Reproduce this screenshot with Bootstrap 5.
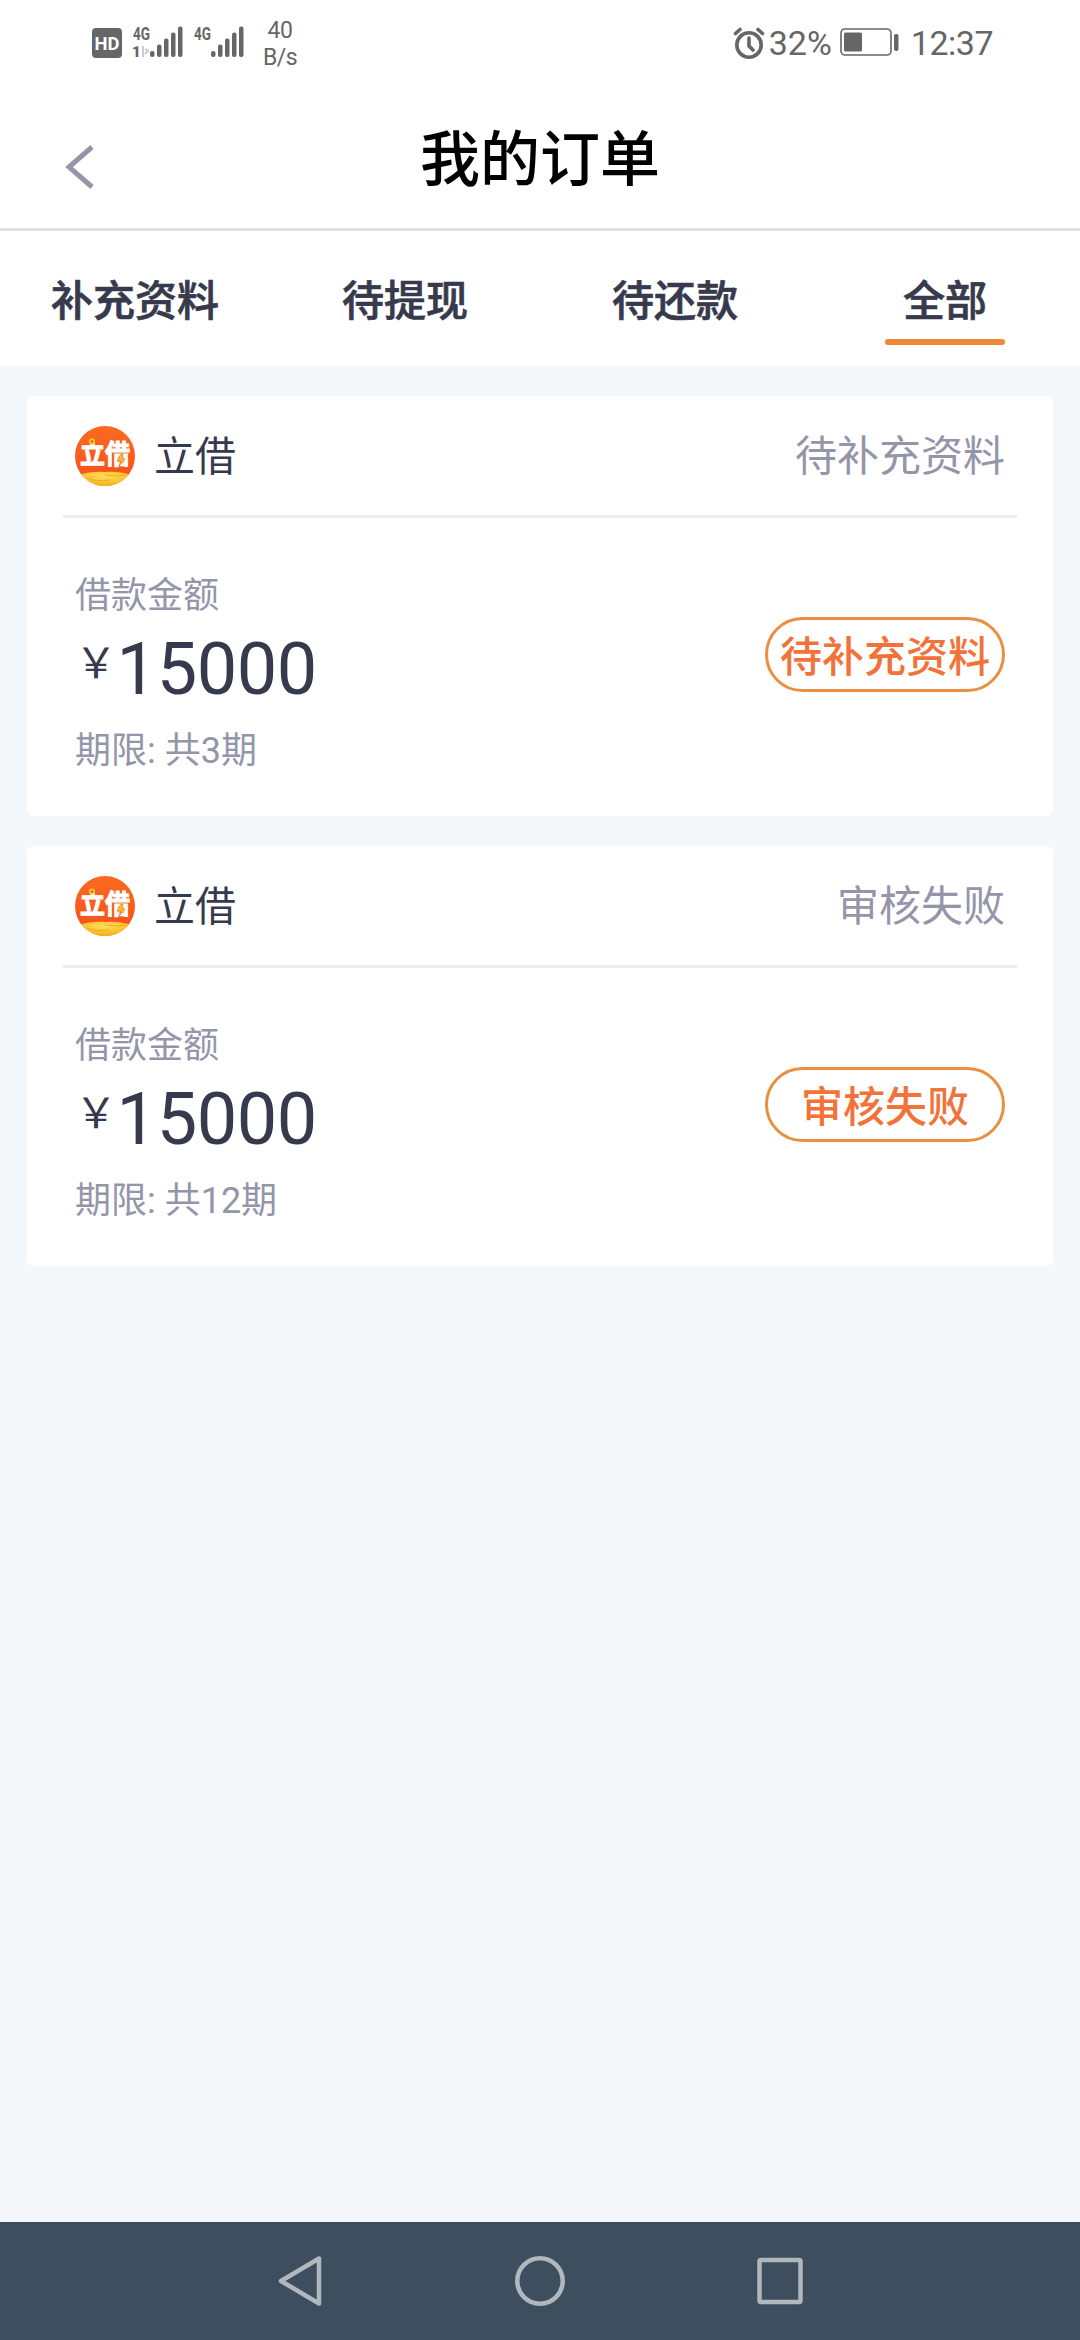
<!DOCTYPE html>
<html lang="zh-CN">
<head>
<meta charset="utf-8">
<meta name="viewport" content="width=device-width, initial-scale=1">
<title>我的订单</title>
<link rel="stylesheet" href="https://cdn.jsdelivr.net/npm/bootstrap@5.3.0/dist/css/bootstrap.min.css">
<style>
  body { font-family: Roboto, "Noto Sans CJK SC", sans-serif; background: #f4f8fb; color: #373a4d; min-height: 2340px; }
  svg { display: block; flex: none; }
  .status-bar { height: 84px; padding: 0 87px 0 92px; color: #666; }
  .net-speed { font-size: 23px; line-height: 27px; letter-spacing: -.5px; margin-left: 73px; padding-top: 17px; width: 40px; }
  .status-right { font-size: 34px; line-height: 40px; padding-top: 2px; }
  .status-right .clock { letter-spacing: -.5px; margin-left: 11px; }
  .title-bar { height: 147px; border-bottom: 3px solid #e0e0e0; padding: 0 62px; }
  .title-bar .side { width: 35px; padding-top: 22px; }
  .title-bar h1 { font-size: 60px; line-height: 84px; font-weight: 500; color: #000; padding-top: 9px; }
  .order-tabs { height: 135px; }
  .order-tabs .nav-link { padding: 41px 0 0; font-size: 42px; line-height: 60px; font-weight: 500; -webkit-text-stroke: .7px; color: #373a4d; }
  .order-tabs .nav-link.active::after { content: ""; display: block; width: 120px; height: 6px; border-radius: 3px; background: #ee8736; margin: 7px auto 0; }
  .order-list { padding: 30px 27px; gap: 30px; }
  .order-card { height: 420px; border: 0; border-radius: 6px; color: #373a4d; }
  .order-head { margin: 0 36px; padding: 0 12px; height: 122px; border-bottom: 3px solid #ededed; font-size: 42px; line-height: 60px; }
  .order-head span { padding-top: 3px; }
  .order-head .app-name { margin-left: 19px; font-size: 41px; }
  .dim { color: #9495a9; }
  .order-body { padding: 52px 48px 0; }
  .field { font-size: 36px; line-height: 52px; }
  .amount { font-size: 72px; line-height: 84px; letter-spacing: -.4px; margin: 6px 0 13px; }
  .amount .yen { font-family: "Noto Sans CJK SC", sans-serif; font-size: 42px; line-height: 60px; margin-top: 2px; }
  .btn-state { width: 240px; height: 75px; border: 3px solid #e99040; color: #f2733a; font-size: 42px; line-height: 60px; font-weight: 500; padding: 7px 0 0; margin-top: 47px; white-space: nowrap; }
  .sys-nav { height: 118px; background: #3d4e5e; }
</style>
</head>
<body class="d-flex flex-column">
<svg width="0" height="0" class="position-absolute" aria-hidden="true">
  <defs>
    <linearGradient id="sky" x1="0" y1="0" x2="0" y2="1"><stop offset="0" stop-color="#fb6a20"/><stop offset="1" stop-color="#f4501b"/></linearGradient>
    <radialGradient id="gold" cx=".5" cy=".3" r=".6"><stop offset="0" stop-color="#ffe05c"/><stop offset="1" stop-color="#fbb419"/></radialGradient>
    <clipPath id="disc"><circle cx="30" cy="30" r="30"/></clipPath>
    <symbol id="logo" viewBox="0 0 60 60">
      <g clip-path="url(#disc)">
        <rect width="60" height="60" fill="url(#sky)"/>
        <path d="M4 49Q16 45 30 46Q44 45 56 49L60 60H0Z" fill="url(#gold)"/>
        <path d="M12 52Q20 56 34 54M30 49Q42 51 51 49" stroke="#f8a818" stroke-width="1" fill="none"/>
      </g>
      <text transform="translate(5 37.500) scale(1 1.080)" font-size="25" font-weight="700" font-family="Noto Sans CJK SC, sans-serif" fill="#fff" stroke="#fff" stroke-width=".9">立借</text>
      <circle cx="17" cy="15.500" r="2.200" fill="#f4501b" stroke="#ffd02b" stroke-width="1.800"/>
      <path d="M46 28L42 35H46L44 40L50 33H46.500L48 28Z" fill="#ffc928" stroke="#e97812" stroke-width=".8"/>
    </symbol>
  </defs>
</svg>

<header class="bg-white">
  <div class="status-bar d-flex justify-content-between">
    <div class="d-flex">
      <svg width="95" height="84" viewBox="92 0 95 84" overflow="visible" fill="currentColor">
        <rect x="92" y="28" width="30" height="30" rx="4"/>
        <text x="94.500" y="50" font-size="19" font-weight="700" fill="#fff" textLength="25" lengthAdjust="spacingAndGlyphs">HD</text>
        <text x="133" y="40" font-size="17.500" font-weight="700" textLength="17" lengthAdjust="spacingAndGlyphs">4G</text>
        <text x="132" y="57" font-size="15" font-weight="900">1</text>
        <path d="M143 46v11M145 49l3 2-3 3" stroke="#ccc" stroke-width="2" fill="none"/>
        <g id="bars"><rect x="150" y="51" width="4.500" height="6" rx="2"/><rect x="157" y="44.500" width="4.500" height="12.500" rx="2"/><rect x="164" y="38.500" width="4.500" height="18.500" rx="2"/><rect x="171" y="32.500" width="4.500" height="24.500" rx="2"/><rect x="178" y="26.500" width="4.500" height="30.500" rx="2"/></g>
        <text x="194" y="40" font-size="17.500" font-weight="700" textLength="17" lengthAdjust="spacingAndGlyphs">4G</text>
        <use href="#bars" x="61"/>
      </svg>
      <div class="net-speed text-center">40<br>B/s</div>
    </div>
    <div class="status-right d-flex align-items-center">
      <svg width="32" height="34" viewBox="0 0 32 34" fill="none" stroke="currentColor" stroke-width="3.600" stroke-linecap="round"><circle cx="16" cy="19" r="12.200"/><path d="M16 12v8l4 4M2.500 7.500L7 3.500M25 3.500L29.500 7.500"/></svg>
      <span class="ms-1">32%</span>
      <svg class="ms-2" width="60" height="30" viewBox="0 0 60 30"><rect x="1" y="1" width="50" height="26" rx="4" fill="none" stroke="currentColor" stroke-width="1.600"/><rect x="4" y="4.500" width="18" height="19" rx="1.500" fill="currentColor"/><rect x="54" y="6" width="4.500" height="17" rx="2" fill="currentColor"/></svg>
      <span class="clock">12:37</span>
    </div>
  </div>
  <div class="title-bar d-flex justify-content-between align-items-center">
    <div class="side"><svg width="35" height="48" viewBox="0 0 35 48" fill="none" stroke="#9495a9" stroke-width="5"><path d="M30 4L7 24L30 44"/></svg></div>
    <h1 class="mb-0">我的订单</h1>
    <div class="side"></div>
  </div>
  <ul class="nav nav-fill order-tabs row g-0">
    <li class="nav-item col-3"><a class="nav-link">补充资料</a></li>
    <li class="nav-item col-3"><a class="nav-link">待提现</a></li>
    <li class="nav-item col-3"><a class="nav-link">待还款</a></li>
    <li class="nav-item col-3"><a class="nav-link active">全部</a></li>
  </ul>
</header>

<main class="order-list d-flex flex-column flex-grow-1">
  <section class="card order-card">
    <div class="order-head d-flex align-items-center">
      <svg width="60" height="60"><use href="#logo"/></svg>
      <span class="app-name">立借</span>
      <span class="dim ms-auto">待补充资料</span>
    </div>
    <div class="order-body d-flex justify-content-between align-items-start">
      <div>
        <div class="field dim">借款金额</div>
        <div class="amount d-flex align-items-start"><span class="yen">￥</span><span>15000</span></div>
        <div class="field dim">期限: 共3期</div>
      </div>
      <button class="btn btn-state rounded-pill">待补充资料</button>
    </div>
  </section>
  <section class="card order-card">
    <div class="order-head d-flex align-items-center">
      <svg width="60" height="60"><use href="#logo"/></svg>
      <span class="app-name">立借</span>
      <span class="dim ms-auto">审核失败</span>
    </div>
    <div class="order-body d-flex justify-content-between align-items-start">
      <div>
        <div class="field dim">借款金额</div>
        <div class="amount d-flex align-items-start"><span class="yen">￥</span><span>15000</span></div>
        <div class="field dim">期限: 共12期</div>
      </div>
      <button class="btn btn-state rounded-pill">审核失败</button>
    </div>
  </section>
</main>

<footer class="sys-nav">
  <svg width="1080" height="118" viewBox="0 0 1080 118" fill="none" stroke="#b0b7bd" stroke-width="4.500" stroke-linejoin="round">
    <path d="M281 59L319 36.500V81.500Z"/>
    <circle cx="540" cy="59" r="22.700"/>
    <rect x="759.500" y="38" width="41" height="42" rx="1.500"/>
  </svg>
</footer>
<script src="https://cdn.jsdelivr.net/npm/bootstrap@5.3.0/dist/js/bootstrap.bundle.min.js"></script>
</body>
</html>
